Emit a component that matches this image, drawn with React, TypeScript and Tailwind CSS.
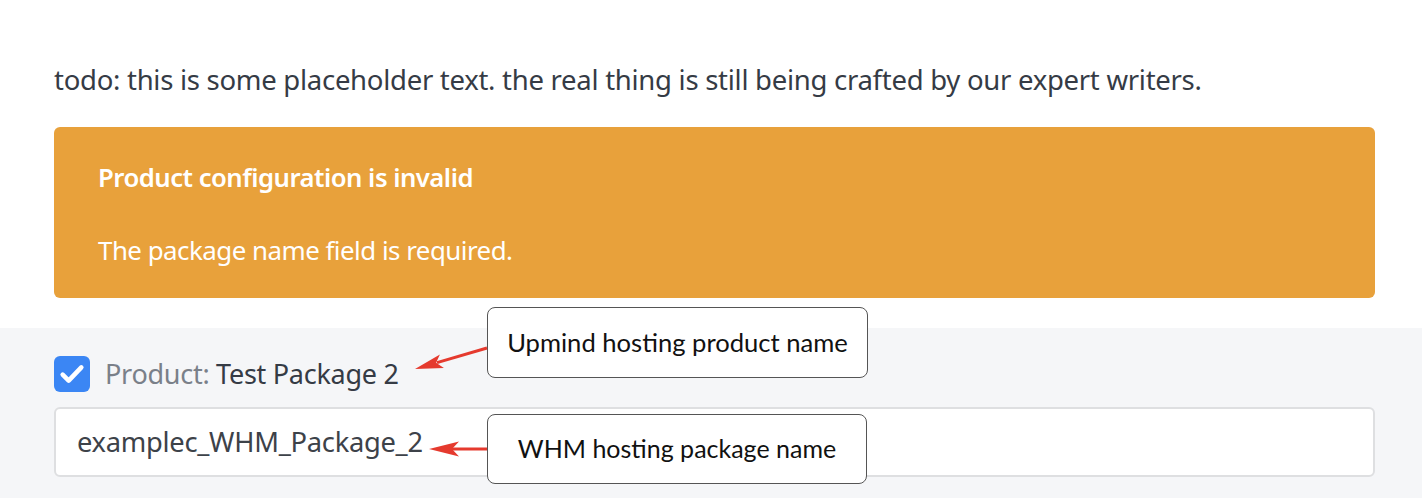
export default function App() {
  return (
    <main
      className="relative min-h-[498px] overflow-hidden bg-white text-[#353b45]"
      style={{ fontFamily: '"Noto Sans", "Open Sans", sans-serif' }}
    >
      <section className="pl-[54px] pr-[47px] pt-[62px]">
        <p className="text-[27.5px] leading-[36px] tracking-[-0.01em]">
          todo: this is some placeholder text. the real thing is still being crafted by our expert writers.
        </p>
        <div className="mt-[29px] rounded-md bg-[#e8a13b] px-[44px] pt-[33px] pb-[30px] text-white">
          <div className="text-[25.7px] font-semibold leading-[36px] tracking-[-0.02em]">
            Product configuration is invalid
          </div>
          <div className="mt-[36px] text-[25.9px] leading-[36px] tracking-[-0.02em]">
            The package name field is required.
          </div>
        </div>
      </section>

      <section className="mt-[30px] min-h-[170px] bg-[#f5f6f8] pl-[54px] pr-[47px] pt-[28px] pb-6">
        <label className="flex items-center gap-[15px]">
          <span className="flex h-9 w-9 items-center justify-center rounded-md bg-[#3b86f4]">
            <svg viewBox="0 0 24 24" className="h-8 w-8" fill="none">
              <path
                d="M5 12.5l4.5 4.5L19 7"
                stroke="white"
                strokeWidth="3.4"
                strokeLinecap="round"
                strokeLinejoin="round"
              />
            </svg>
          </span>
          <span className="text-[27px] leading-[36px] tracking-[-0.01em]">
            <span className="text-[#7a8089]">Product:</span>{" "}
            <span className="text-[#353b45]">Test Package 2</span>
          </span>
        </label>
        <div className="mt-[15px] flex h-[70px] items-center rounded-md border-2 border-[#dedfe1] bg-white px-[21px]">
          <span className="text-[27.3px] tracking-[-0.01em] text-[#3d4249]">examplec_WHM_Package_2</span>
        </div>
      </section>

      <div
        className="absolute left-[487px] top-[307px] flex h-[71px] w-[381px] items-center justify-center rounded-lg border-[1.5px] border-[#555] bg-white text-[25.6px] text-[#111]"
        style={{ fontFamily: 'Lato, "Liberation Sans", sans-serif' }}
      >
        Upmind hosting product name
      </div>
      <div
        className="absolute left-[487px] top-[414px] flex h-[70px] w-[380px] items-center justify-center rounded-lg border-[1.5px] border-[#555] bg-white text-[25px] text-[#111]"
        style={{ fontFamily: 'Lato, "Liberation Sans", sans-serif' }}
      >
        WHM hosting package name
      </div>

      <svg className="pointer-events-none absolute left-0 top-0 h-[498px] w-[1422px]" viewBox="0 0 1422 498">
        <line x1="487" y1="348" x2="437" y2="362.6" stroke="#e53a2e" strokeWidth="3" />
        <polygon points="415,369 443.9,367.9 436.1,362.8 439.9,354.5" fill="#e53a2e" />
        <line x1="487" y1="449" x2="452" y2="449" stroke="#e53a2e" strokeWidth="3" />
        <polygon points="429,449 459,456.5 452,449 459,441.5" fill="#e53a2e" />
      </svg>
    </main>
  );
}
